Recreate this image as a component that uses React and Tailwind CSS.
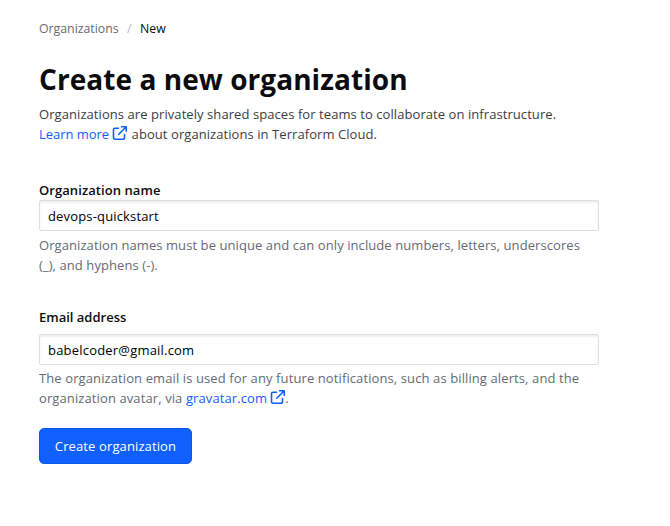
function ExternalIcon({ className = "" }) {
  return (
    <svg className={`inline-block size-4 align-[-2px] ${className}`} viewBox="0 0 16 16" fill="none" stroke="currentColor" strokeWidth="1.6" strokeLinecap="round" strokeLinejoin="round">
      <path d="M9.5 1.75h4.75v4.5M14 2 6.75 9.25M6.5 3.25H3A1.5 1.5 0 0 0 1.5 4.75v8A1.5 1.5 0 0 0 3 14.25h8a1.5 1.5 0 0 0 1.5-1.5V9.5" />
    </svg>
  );
}

function Field({ label, type, value, className, labelClass, inputClass, hintClass, children }) {
  return (
    <label className={`block ${className}`}>
      <span className={`block font-semibold text-[#0c0c0e] ${labelClass}`}>{label}</span>
      <input
        type={type}
        defaultValue={value}
        className={`block h-[31px] w-[560px] rounded-[2px] border border-[#dcdee2] bg-white px-2 text-[13px] text-black shadow-[inset_0_2px_2px_#f0f0f2] outline-none ${inputClass}`}
      />
      <span className={`block whitespace-nowrap text-[#656a76] ${hintClass}`}>{children}</span>
    </label>
  );
}

export default function App() {
  return (
    <main className="h-[526px] w-[670px] bg-white px-[39px] pt-[19px] font-['Open_Sans',sans-serif] text-[13px] leading-5 tracking-[0.07px] text-[#3b3d45]">
      <nav className="flex h-5 gap-2 text-[12.3px] tracking-normal text-[#656a76]">
        <span className="w-[80px]">Organizations</span>
        <span className="w-[5px] text-[#b4b7bf]">/</span>
        <span className="text-[#0c0c0e]">New</span>
      </nav>
      <h1 className="mt-[21px] h-[38px] whitespace-nowrap text-[28px] font-bold leading-[38px] tracking-[0.06px] text-[#0c0c0e]">Create a new organization</h1>
      <p className="mt-[6px] h-10 whitespace-nowrap">
        Organizations are privately shared spaces for teams to collaborate on infrastructure.<br />
        <a className="text-[#1060ff]"><span className="tracking-[-0.03px]">Learn more</span><ExternalIcon className="ml-[3px]" /></a> about organizations in Terraform Cloud.
      </p>
      <form>
        <Field label="Organization name" type="text" value="devops-quickstart" className="mt-9" labelClass="h-5 tracking-[0.07px]" inputClass="tracking-[0.16px]" hintClass="mt-1 tracking-[0.08px]">
          Organization names must be unique and can only include numbers, letters, underscores<br />
          (_), and hyphens (-).
        </Field>
        <Field label="Email address" type="email" value="babelcoder@gmail.com" className="mt-8" labelClass="h-[27px] tracking-normal" inputClass="tracking-[0.2px]" hintClass="mt-[3px] h-10 tracking-[0.105px]">
          The organization email is used for any future notifications, such as billing alerts, and the<br />
          organization avatar, via <a className="text-[#1060ff]">gravatar.com<ExternalIcon className="ml-[3px]" /></a><span className="-ml-px">.</span>
        </Field>
        <button type="button" className="mt-5 h-9 w-[153px] rounded-[5px] border border-[#0c56e9] bg-[#1060ff] whitespace-nowrap tracking-[0.12px] text-white">Create organization</button>
      </form>
    </main>
  );
}
